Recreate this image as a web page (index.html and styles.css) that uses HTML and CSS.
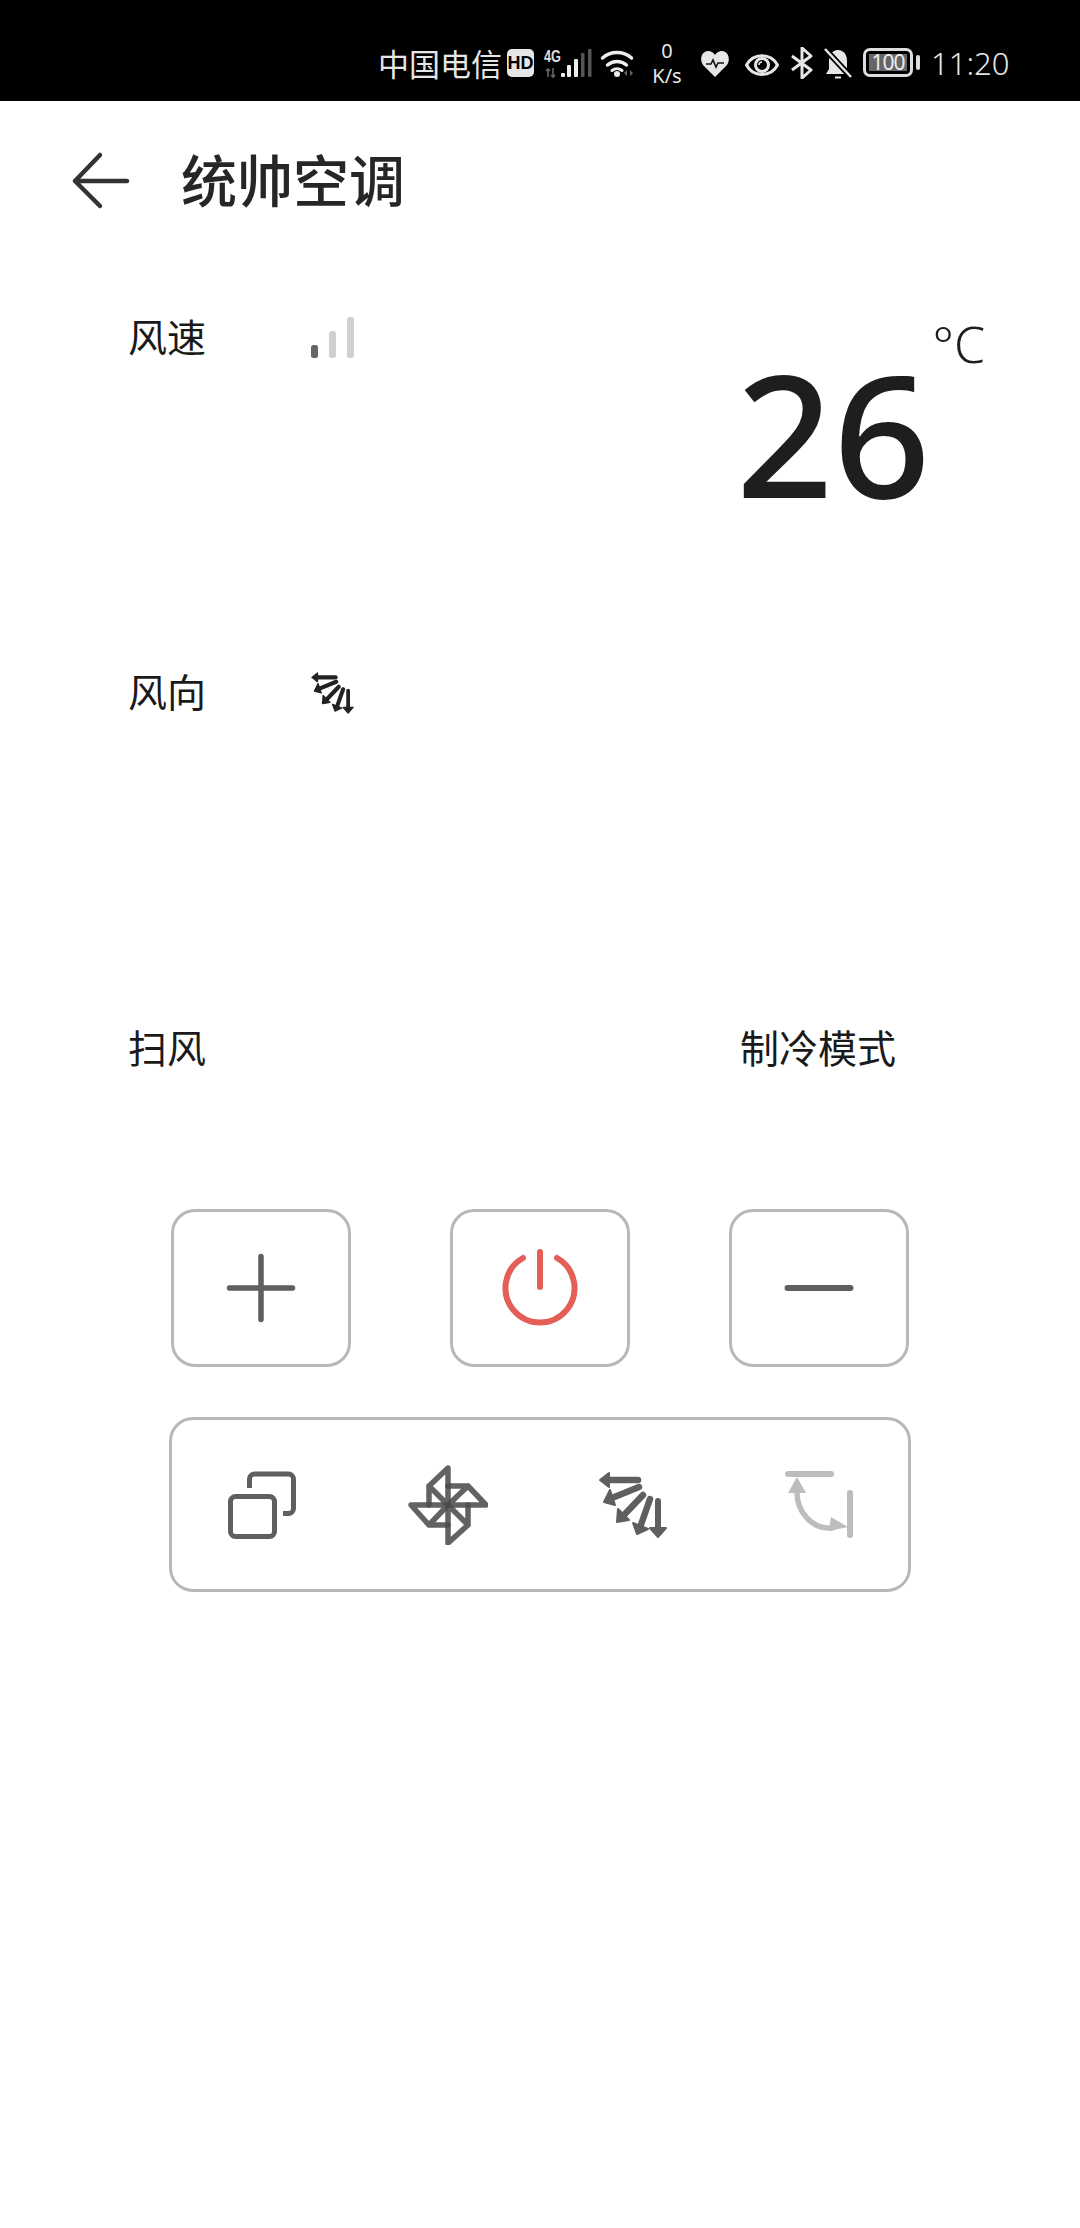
FILE: index.html
```html
<!DOCTYPE html>
<html lang="zh-CN">
    <head>
        <meta charset="UTF-8" />
        <meta name="viewport" content="width=device-width, initial-scale=1.0" />
        <title>统帅空调</title>
        <link rel="stylesheet" href="styles.css">
    </head>
    <body>
        <!-- arrows shared by the 风向 row and the bottom card -->
        <svg class="defs">
            <symbol id="swing" viewBox="0 0 80 80">
                <g fill="currentColor" stroke="currentColor" stroke-width="2" stroke-linejoin="round">
                    <path d="M46 15H17" stroke-width="6.500" stroke-linecap="round"/>
                    <polygon points="8,15 17,8 17,22"/>
                    <path d="M47 22L20 33" stroke-width="6.500" stroke-linecap="round"/>
                    <polygon points="12,37 23,40 18,25"/>
                    <path d="M51 30L32 50" stroke-width="6.500" stroke-linecap="round"/>
                    <polygon points="25,57 37,55 26,44"/>
                    <path d="M58 34L48.500 61" stroke-width="6.500" stroke-linecap="round"/>
                    <polygon points="45,69 56,64 41,58"/>
                    <path d="M66 36V63" stroke-width="6" stroke-linecap="round"/>
                    <polygon points="66,72 58,63 74,63"/>
                </g>
            </symbol>
        </svg>

        <div class="status">
            <span class="carrier">中国电信</span>
            <span class="hd">HD</span>
            <svg class="st-signal" width="49" height="32" viewBox="0 0 49 32">
                <text x="1" y="15" class="net" textLength="17" lengthAdjust="spacingAndGlyphs">4G</text>
                <path d="M5 30V22M3 24l2-2 2 2M10 21v9M8 28l2 2 2-2" stroke="#666" stroke-width="1.600" fill="none"/>
                <rect x="18" y="26" width="4" height="4" rx="1" fill="#eee"/>
                <rect x="24" y="18" width="4" height="12" rx="1" fill="#eee"/>
                <rect x="31" y="12" width="4" height="18" rx="1" fill="#eee"/>
                <rect x="38" y="6" width="3.500" height="24" rx="1" fill="#555"/>
                <rect x="45" y="2" width="3.500" height="28" rx="1" fill="#555"/>
            </svg>
            <svg class="st-wifi" width="36" height="32" viewBox="0 0 36 32">
                <path d="M2.500 11A22 22 0 0 1 31.500 11M7.500 18A15 15 0 0 1 26.500 18" stroke="#eee" stroke-width="3.500" fill="none" stroke-linecap="round"/>
                <path d="M12 23.500A8 8 0 0 1 22 23.500" stroke="#eee" stroke-width="3" fill="none" stroke-linecap="round"/>
                <circle cx="17" cy="27" r="3" fill="#eee"/>
                <path d="M24 26l3-3v6zM30 23v6l3-3z" fill="#666"/>
            </svg>
            <span class="speed"><b>0</b><b>K/s</b></span>
            <svg class="st-heart" width="30" height="32" viewBox="0 0 30 32">
                <path d="M15 30L3 18C-1 12 2 4 8 4C11 4 14 6 15 8C16 6 19 4 22 4C28 4 31 12 27 18Z" fill="#e6e6e6"/>
                <path d="M6 17H11L13 13L16 20L18 16H24" stroke="#111" stroke-width="1.600" fill="none"/>
            </svg>
            <svg class="st-eye" width="34" height="32" viewBox="0 0 34 32">
                <path d="M1.500 18C8 5.500 26 5.500 32.500 18C26 30.500 8 30.500 1.500 18Z" stroke="#e6e6e6" stroke-width="3" fill="none"/>
                <circle cx="17" cy="18" r="6.500" stroke="#e6e6e6" stroke-width="3" fill="none"/>
                <path d="M14 18a3 3 0 0 1 3-3" stroke="#e6e6e6" stroke-width="1.500" fill="none"/>
            </svg>
            <svg class="st-bt" width="24" height="32" viewBox="0 0 24 32">
                <path d="M2 9L21 23L12 31V1L21 9L2 23" stroke="#e6e6e6" stroke-width="3" fill="none" stroke-linejoin="round"/>
            </svg>
            <svg class="st-bell" width="28" height="32" viewBox="0 0 28 32">
                <path d="M14 3C20 3 23 8 23 14V22L26 27H2L5 22V14C5 8 8 3 14 3Z" fill="#e6e6e6"/>
                <path d="M1 2L27 30" stroke="#000" stroke-width="6"/>
                <path d="M1 2L27 30" stroke="#e6e6e6" stroke-width="2.500"/>
                <path d="M11 30.500H17" stroke="#e6e6e6" stroke-width="2"/>
            </svg>
            <span class="battery"><span class="battery-level">100</span></span>
            <span class="battery-nub"></span>
            <span class="clock">11:20</span>
        </div>

        <header class="topbar">
            <svg class="back" width="60" height="60" viewBox="0 0 60 60">
                <path d="M30 4L5 30L30 55M5 30H57" stroke="#333" stroke-width="4.500" fill="none" stroke-linecap="round" stroke-linejoin="round"/>
            </svg>
            <h1>统帅空调</h1>
        </header>

        <section class="panel">
            <div class="field">
                <span class="label">风速</span>
                <svg class="speed-bars" width="44" height="42" viewBox="0 0 44 42">
                    <rect x="0" y="28" width="7" height="13" rx="2.500" fill="#666"/>
                    <rect x="18" y="14" width="7" height="27" rx="2.500" fill="#d0d0d0"/>
                    <rect x="36" y="0" width="7" height="41" rx="2.500" fill="#d0d0d0"/>
                </svg>
            </div>
            <div class="temp">
                <span class="temp-value">26</span>
                <span class="temp-unit">°C</span>
            </div>
            <div class="field">
                <span class="label">风向</span>
                <svg class="dir-icon" width="45" height="44" viewBox="5 5 72 70">
                    <use href="#swing" width="80" height="80"/>
                </svg>
            </div>
            <div class="field">
                <span class="label">扫风</span>
            </div>
            <div class="mode">制冷模式</div>
        </section>

        <section class="keys">
            <button class="key">
                <svg width="80" height="80" viewBox="0 0 80 80">
                    <path d="M8.500 40H71.500M40 8.500V71.500" stroke="#5f5f5f" stroke-width="5.500" stroke-linecap="round"/>
                </svg>
            </button>
            <button class="key">
                <svg width="80" height="80" viewBox="0 0 80 80">
                    <path d="M23 10A34.500 34.500 0 1 0 57 10M40 4V39" stroke="#e35f58" stroke-width="6" fill="none" stroke-linecap="round"/>
                </svg>
            </button>
            <button class="key">
                <svg width="80" height="80" viewBox="0 0 80 80">
                    <path d="M8.500 40H71.500" stroke="#5f5f5f" stroke-width="6" stroke-linecap="round"/>
                </svg>
            </button>
        </section>

        <section class="card">
            <button class="tool">
                <svg width="80" height="80" viewBox="0 0 80 80">
                    <rect x="6.500" y="31.500" width="44" height="40" rx="5" stroke="#5f5f5f" stroke-width="5" fill="none"/>
                    <path d="M25.500 23V14a5 5 0 0 1 5-5H64.500a5 5 0 0 1 5 5V43.500a5 5 0 0 1-5 5H59" stroke="#5f5f5f" stroke-width="5" fill="none"/>
                </svg>
            </button>
            <button class="tool">
                <svg width="80" height="80" viewBox="0 0 80 80">
                    <g stroke="#4c4c4c" stroke-opacity="0.88" stroke-width="5.500" fill="none" stroke-linejoin="round" stroke-linecap="round">
                        <path d="M40 40V3L21 21ZM21 21V40"/>
                        <path d="M40 40H78L60 21ZM60 21H40"/>
                        <path d="M40 40V78L60 60ZM60 60V40"/>
                        <path d="M40 40H3L21 60ZM21 60H40"/>
                    </g>
                </svg>
            </button>
            <button class="tool tool-swing">
                <svg width="80" height="80" viewBox="0 0 80 80">
                    <use href="#swing" width="80" height="80"/>
                </svg>
            </button>
            <button class="tool">
                <svg width="80" height="80" viewBox="0 0 80 80">
                    <path d="M12 9H55M74 28V70" stroke="#bdbdbd" stroke-width="6" stroke-linecap="round"/>
                    <path d="M21 25C20 47 37 66 58 62.500" stroke="#bdbdbd" stroke-width="5.500" fill="none"/>
                    <path d="M21 12L12 28H30ZM72 62L55 52L53 66Z" fill="#bdbdbd"/>
                </svg>
            </button>
        </section>
    </body>
</html>
```

FILE: styles.css
```css
* {
    padding: 0;
    margin: 0;
    box-sizing: border-box;
}
body {
    width: 1080px;
    height: 2228px;
    background-color: #fff;
    font-family: "Noto Sans CJK SC", "Noto Sans", sans-serif;
    overflow: hidden;
}
svg {
    display: block;
    flex: none;
}
.defs {
    display: none;
}

/* status bar */
.status {
    display: flex;
    align-items: center;
    height: 101px;
    padding: 24px 0 0 378px;
    background-color: #000;
    color: #e6e6e6;
}
.carrier {
    width: 124px;
    font-size: 31px;
    line-height: 32px;
}
.hd {
    width: 27px;
    height: 28px;
    margin-left: 5px;
    border-radius: 5px;
    background-color: #e6e6e6;
    color: #000;
    font: 700 18px/28px "Liberation Sans", sans-serif;
    text-align: center;
}
.st-signal { margin-left: 9px; }
.net {
    font: 700 17px "Liberation Sans", sans-serif;
    fill: #ddd;
}
.st-wifi { margin-left: 8px; }
.speed {
    display: flex;
    flex-direction: column;
    align-items: center;
    width: 30px;
    margin-left: 16px;
    font-family: "Noto Sans", sans-serif;
    font-size: 20px;
    line-height: 25px;
}
.speed b { font-weight: 400; }
.st-heart { margin-left: 18px; }
.st-eye { margin-left: 15px; }
.st-bt { margin-left: 11px; }
.st-bell { margin-left: 10px; }
.battery {
    width: 50px;
    height: 29px;
    margin-left: 11px;
    padding: 3px;
    border: 3px solid #ddd;
    border-radius: 7px;
}
.battery-level {
    display: block;
    height: 17px;
    background-color: #666;
    color: #eee;
    font: 400 21px/17px "Noto Sans", sans-serif;
    text-align: center;
    letter-spacing: -1px;
}
.battery-nub {
    width: 4px;
    height: 15px;
    margin-left: 3px;
    border-radius: 2px;
    background-color: #ddd;
}
.clock {
    margin-left: 11px;
    font: 300 31px/32px "Noto Sans", sans-serif;
}

/* title */
.topbar {
    display: flex;
    align-items: center;
    height: 159px;
    padding-left: 70px;
}
.topbar h1 {
    margin: 0 0 6px 51px;
    font-size: 56px;
    font-weight: 500;
    line-height: 64px;
    color: #262626;
}

/* readings */
.panel {
    display: grid;
    grid-template-columns: 612px 1fr;
    grid-template-rows: 355px 356px 191px;
    margin-top: 47px;
    padding-left: 128px;
    color: #1a1a1a;
}
.field {
    display: flex;
    align-items: flex-start;
}
.label {
    width: 183px;
    font-size: 39px;
    line-height: 56px;
}
.speed-bars { margin-top: 10px; }
.dir-icon {
    margin: 9px 0 0 -1px;
    color: #222;
}
.temp {
    display: flex;
    grid-column: 2;
    grid-row: 1 / span 2;
    align-items: flex-start;
    font-family: "Noto Sans", sans-serif;
    color: #1e1e1e;
}
.temp-value {
    margin: 40px 0 0 -4px;
    font-size: 170px;
    font-weight: 500;
    line-height: 170px;
}
.temp-unit {
    margin: 12px 0 0 2px;
    font-size: 50px;
    font-weight: 300;
    line-height: 50px;
}
.mode {
    grid-column: 2;
    font-size: 39px;
    line-height: 56px;
}

/* buttons */
.keys {
    display: flex;
    gap: 99px;
    padding-left: 171px;
}
.key {
    display: flex;
    align-items: center;
    justify-content: center;
    width: 180px;
    height: 158px;
    border: 3px solid #b8b8b8;
    border-radius: 24px;
    background: none;
}
.card {
    display: grid;
    grid-template-columns: repeat(4, 1fr);
    width: 742px;
    height: 175px;
    margin: 50px 0 0 169px;
    border: 3px solid #b8b8b8;
    border-radius: 24px;
}
.tool {
    display: flex;
    align-items: center;
    justify-content: center;
    border: 0;
    background: none;
}
.tool-swing {
    color: #5f5f5f;
}
```
